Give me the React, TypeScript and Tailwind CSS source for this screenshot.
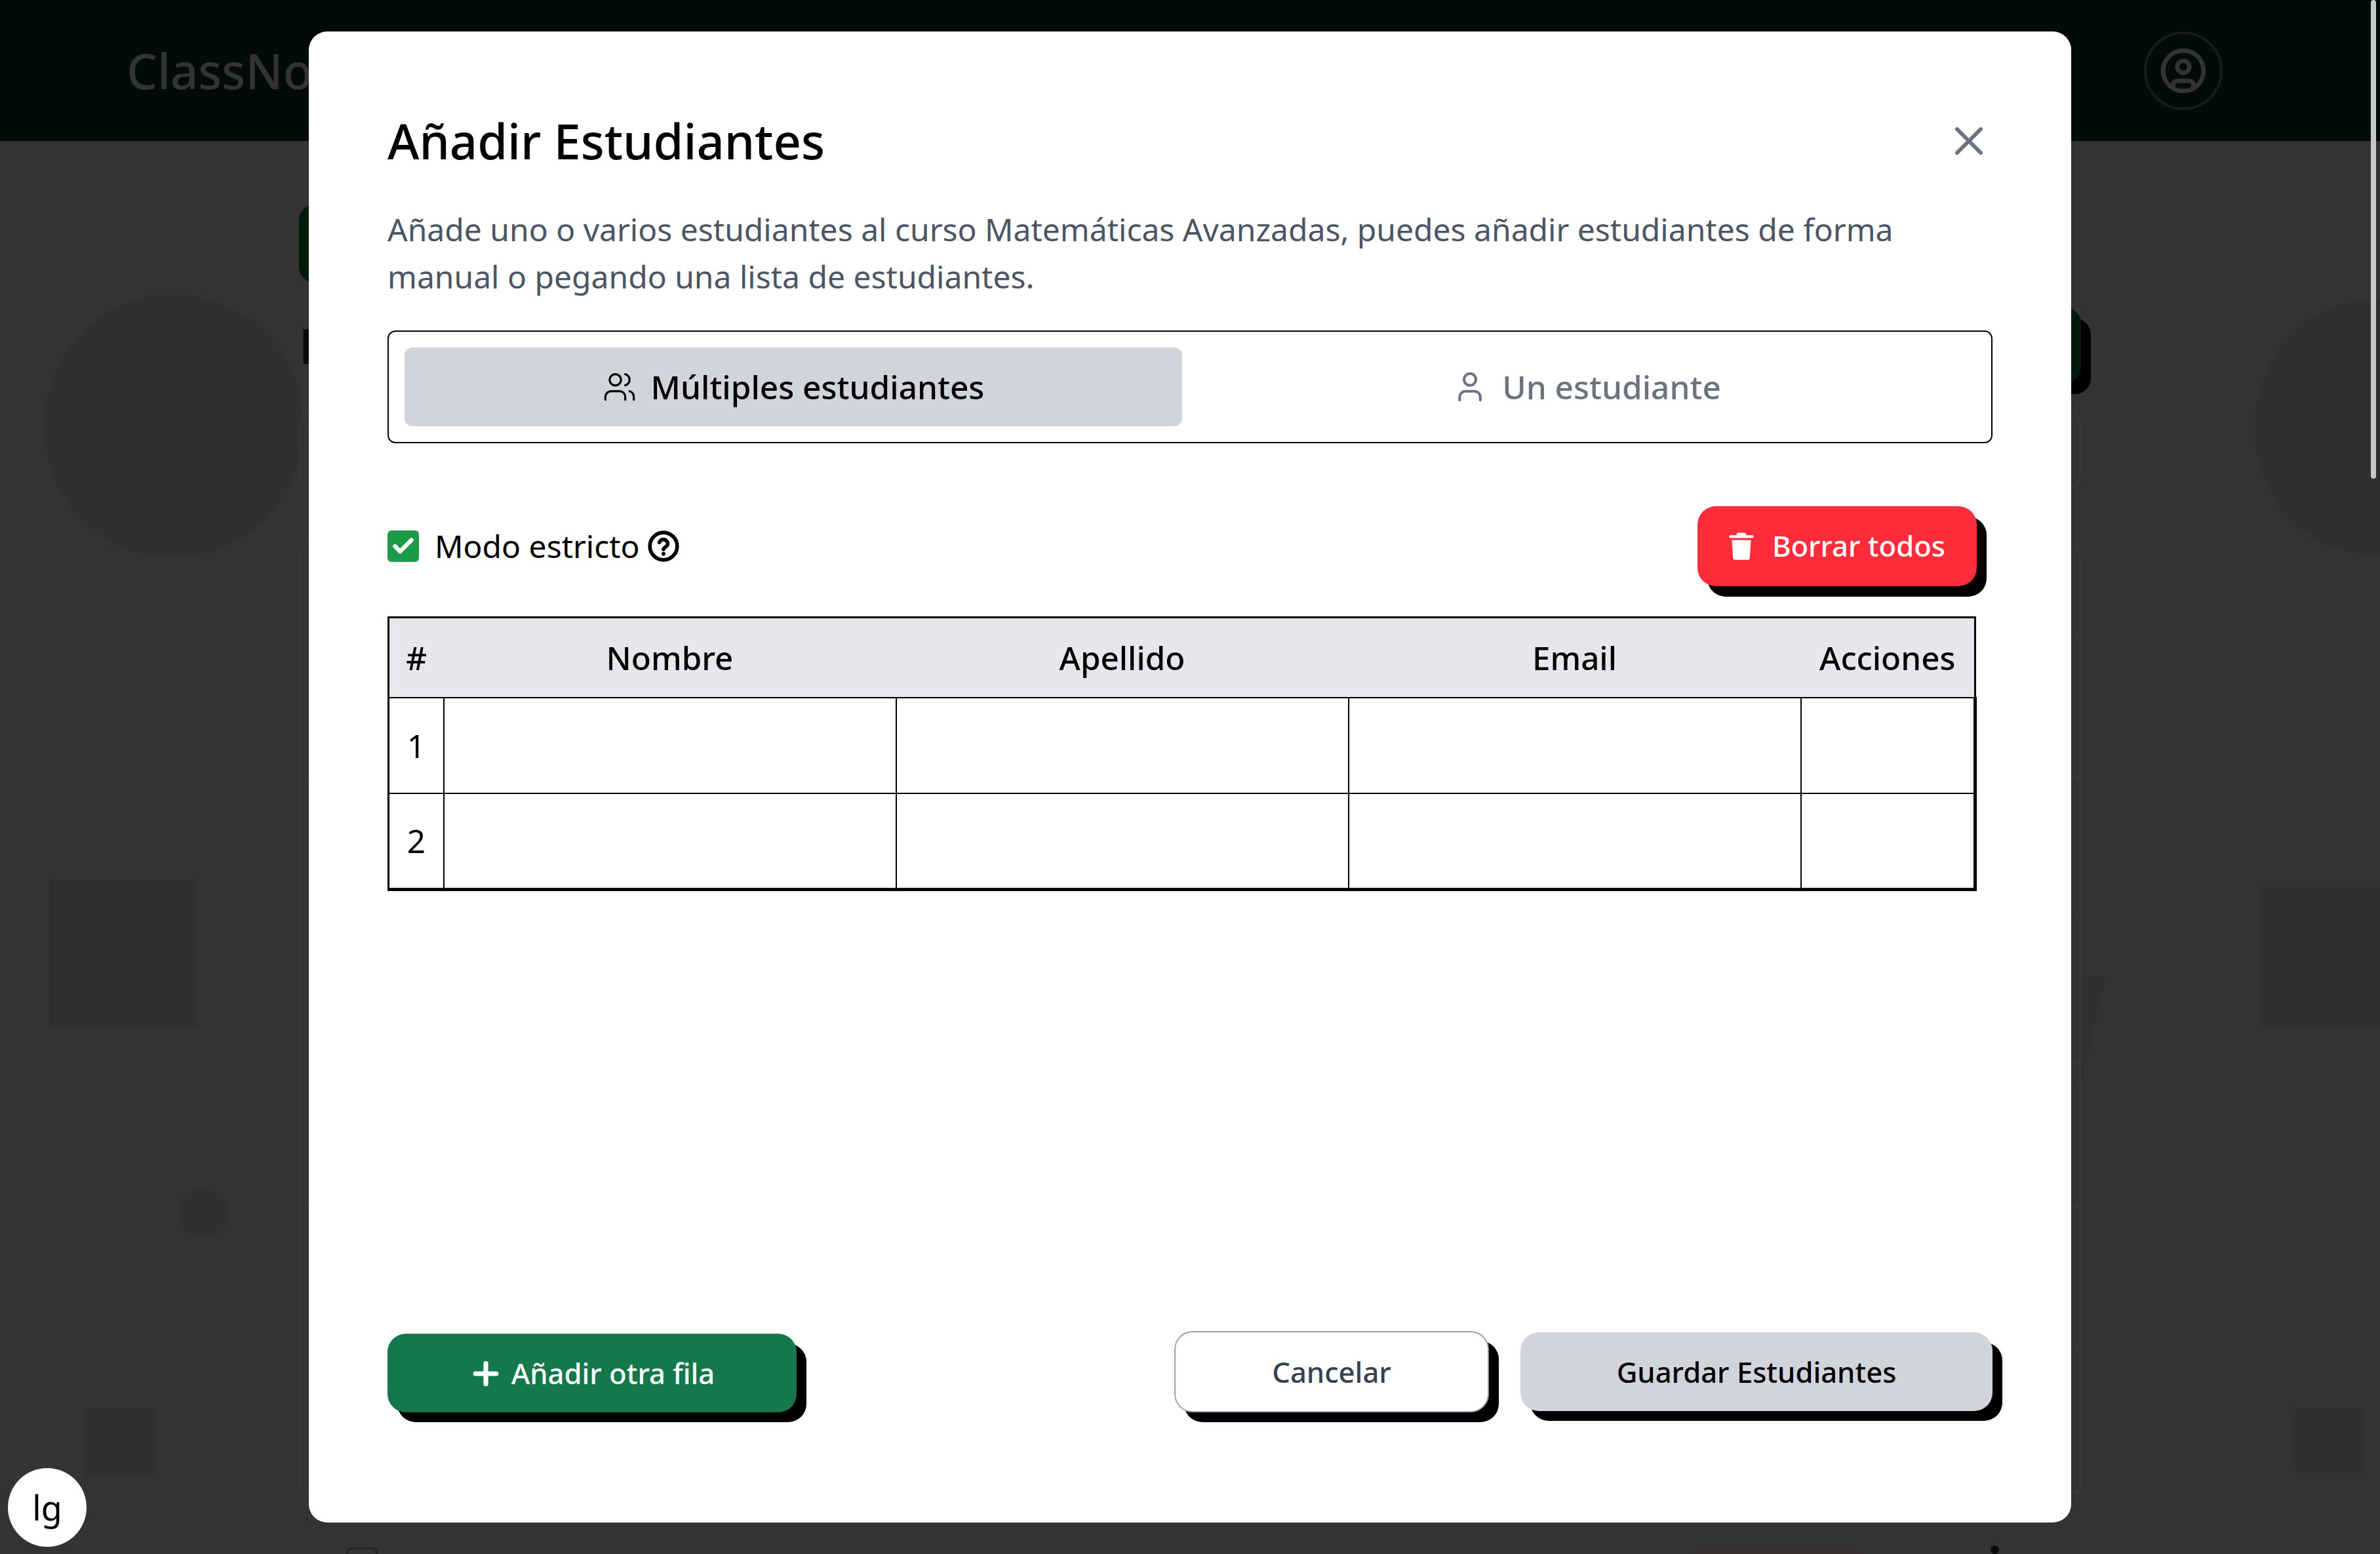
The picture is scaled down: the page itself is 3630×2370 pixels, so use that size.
import { Users, User, X, Plus, Check, CircleUser } from "lucide-react";

const font = { fontFamily: '"Noto Sans", sans-serif' };

function Trash() {
  return (
    <svg viewBox="0 0 24 24" className="w-[50px] h-[50px] -ml-[6px]" fill="white">
      <path d="M9.5 2.2h5a1 1 0 0 1 1 .9l.1.9H20a1 1 0 0 1 0 2H4a1 1 0 0 1 0-2h4.4l.1-.9a1 1 0 0 1 1-.9Z" />
      <path d="M5 7.5h14l-.9 13.2a1.5 1.5 0 0 1-1.5 1.3H7.4a1.5 1.5 0 0 1-1.5-1.3L5 7.5Z" />
    </svg>
  );
}

function Help() {
  return (
    <svg viewBox="0 0 24 24" className="w-[50px] h-[50px]" fill="none" stroke="black" strokeWidth="2.7" strokeLinecap="round" strokeLinejoin="round">
      <circle cx="12" cy="12" r="10" />
      <path d="M8.9 9.2a3.2 3.2 0 0 1 6.2 1c0 2.1-3.1 2.6-3.1 4.1" />
      <path d="M12 17.6h.01" />
    </svg>
  );
}

function Background() {
  return (
    <div className="relative h-[2370px] w-[3630px] overflow-hidden bg-[#333333] flex flex-col">
      <header className="h-[215px] shrink-0 bg-[#030b08] pl-[193px] pr-[240px] flex items-center justify-between">
        <span className="text-[74px] font-medium text-[#333333]">ClassNotes</span>
        <div className="w-[120px] h-[120px] rounded-full border-[4px] border-[#1a1a1a] flex items-center justify-center">
          <CircleUser className="w-[74px] h-[74px] text-[#333333]" strokeWidth={2.2} />
        </div>
      </header>
      <div className="flex-1 flex justify-between">
        <div className="w-[456px] shrink-0 pl-[68px] pt-[235px]">
          <div className="w-[394px] h-[400px] rounded-full bg-[#303030]" />
          <div className="ml-[8px] mt-[491px] w-[224px] h-[228px] bg-[#303030]" />
          <div className="ml-[204px] mt-[244px] w-[76px] h-[73px] rounded-full bg-[#303030]" />
          <div className="ml-[60px] mt-[261px] w-[107px] h-[105px] bg-[#303030]" />
        </div>
        <div className="flex-1 pt-[97px]">
          <div className="flex justify-between items-start h-[126px]">
            <div className="w-[60px] h-[119px] rounded-[24px] bg-[#021a0c]" />
            <div className="w-[100px] h-[115px] mt-[157px] rounded-[24px] bg-[#021a0c] shadow-[15px_17px_0_0_#000]" />
          </div>
          <div className="mt-[52px] h-[74px] text-[74px] leading-[74px] font-bold text-[#080c0c]">E</div>
          <div className="mt-[61px] h-[122px] rounded-[24px] border-[2px] border-[#393939]" />
          <div className="mt-[79px] h-[142px] rounded-t-[24px] border-[2px] border-[#393939]" />
          {[0, 1, 2, 3, 4, 5].map((i) => (
            <div key={i} className="h-[218px] border-[2px] border-t-0 border-[#393939]" />
          ))}
          <div className="flex items-start pt-[84px] text-[44px] leading-[60px] text-[#0a0a0a]">
            <span className="ml-[72px] w-[48px] h-[48px] rounded-[8px] border-[3px] border-[#222222]" />
            <span className="ml-[142px] w-[1017px]">Hoodie G</span>
            <span className="w-[845px]">Ropa hombre</span>
            <span className="w-[259px] h-[60px] rounded-[24px] bg-[#3a2e2e]" />
            <span className="ml-[197px] -mt-[3px] w-[13px] h-[13px] rounded-full bg-[#0a0a0a]" />
          </div>
        </div>
        <div className="w-[456px] shrink-0 flex flex-col items-end pt-[240px]">
          <div className="w-[190px] h-[393px] rounded-l-full bg-[#303030]" />
          <div className="mt-[497px] w-[185px] h-[225px] bg-[#303030]" />
          <div className="mt-[577px] mr-[25px] w-[105px] h-[100px] bg-[#303030]" />
        </div>
      </div>
      <svg className="absolute left-[3175px] top-[1490px]" width="36" height="160" viewBox="0 0 36 160">
        <polygon points="0,0 36,0 0,160" fill="#303030" />
      </svg>
    </div>
  );
}

export default function App() {
  return (
    <div className="relative h-[2370px] w-[3630px] overflow-hidden" style={font}>
      <Background />
      {/* scrollbar */}
      <div className="absolute top-0 right-[6px] w-[8px] h-[730px] rounded-full bg-[#c8c8c8]" />
      {/* language badge */}
      <div className="absolute left-[12px] bottom-[11px] w-[120px] h-[120px] rounded-full bg-white flex items-center justify-center text-[52px] text-black">
        lg
      </div>
      {/* modal */}
      <div className="absolute left-[471px] top-[48px] w-[2688px] h-[2274px] bg-white rounded-[28px] px-[120px] pt-[115px] flex flex-col">
        <div className="flex items-center justify-between h-[104px]">
          <h2 className="text-[74px] leading-[104px] font-medium text-black">Añadir Estudiantes</h2>
          <X className="w-[72px] h-[72px] text-[#6b7280]" strokeWidth={2} />
        </div>
        <p className="mt-[47px] text-[48px] leading-[72px] text-[#4b5563]">
          Añade uno o varios estudiantes al curso Matemáticas Avanzadas, puedes añadir estudiantes de forma
          <br />
          manual o pegando una lista de estudiantes.
        </p>
        <div className="mt-[46px] h-[172px] rounded-[12px] border-[2px] border-black p-[24px] flex gap-[24px]">
          <div className="flex-1 rounded-[12px] bg-[#d1d5db] flex items-center justify-center gap-[22px] text-[49.5px] font-medium text-black">
            <Users className="w-[52px] h-[52px]" strokeWidth={1.5} />
            Múltiples estudiantes
          </div>
          <div className="flex-1 flex items-center justify-center gap-[22px] text-[49.5px] font-medium text-[#6b7280]">
            <User className="w-[54px] h-[54px]" strokeWidth={1.8} />
            Un estudiante
          </div>
        </div>
        <div className="mt-[95px] h-[124px] flex items-center justify-between pr-[24px]">
          <div className="flex items-center text-[48px] text-black">
            <span className="w-[48px] h-[48px] rounded-[6px] bg-[#1b9a47] flex items-center justify-center">
              <Check className="w-[38px] h-[38px] text-white" strokeWidth={4} />
            </span>
            <span className="ml-[24px] mr-[11px]">Modo estricto</span>
            <Help />
          </div>
          <button className="h-[122px] w-[426px] rounded-[28px] bg-[#ff2d3b] text-white text-[43.6px] font-medium flex items-center justify-center gap-[22px] shadow-[15px_16px_0_0_#000]">
            <Trash />
            Borrar todos
          </button>
        </div>
        <table className="mt-[45px] w-[2424px] border-[3px] border-black border-collapse table-fixed text-[49.3px] text-black">
          <thead>
            <tr className="h-[122px] bg-[#e5e7eb]">
              <th className="w-[84px] font-medium">#</th>
              <th className="w-[690px] font-medium">Nombre</th>
              <th className="w-[690px] font-medium">Apellido</th>
              <th className="w-[690px] font-medium">Email</th>
              <th className="font-medium">Acciones</th>
            </tr>
          </thead>
          <tbody>
            <tr className="h-[146px]">
              <td className="border-[2px] border-black text-center">1</td>
              <td className="border-[2px] border-black" />
              <td className="border-[2px] border-black" />
              <td className="border-[2px] border-black" />
              <td className="border-[2px] border-r-[5px] border-black" />
            </tr>
            <tr className="h-[147px]">
              <td className="border-[2px] border-b-[5px] border-black text-center">2</td>
              <td className="border-[2px] border-b-[5px] border-black" />
              <td className="border-[2px] border-b-[5px] border-black" />
              <td className="border-[2px] border-b-[5px] border-black" />
              <td className="border-[2px] border-b-[5px] border-r-[5px] border-black" />
            </tr>
          </tbody>
        </table>
        <div className="mt-auto mb-[168px] flex items-end justify-between">
          <button className="h-[120px] w-[624px] pl-[9px] pt-[2px] rounded-[28px] bg-[#15784b] text-white text-[43.6px] font-medium flex items-center justify-center gap-[12px] shadow-[15px_15px_0_0_#000]">
            <Plus className="w-[54px] h-[54px] -ml-[11px]" strokeWidth={3.2} />
            Añadir otra fila
          </button>
          <div className="flex items-center gap-[48px]">
            <button className="h-[124px] w-[480px] pt-[2px] rounded-[28px] bg-white border-[2px] border-[#9ca3af] text-[#374151] text-[43.6px] font-medium shadow-[15px_15px_0_0_#000]">
              Cancelar
            </button>
            <button className="h-[120px] w-[720px] pt-[2px] rounded-[28px] bg-[#d1d5db] text-black text-[43.6px] font-medium shadow-[15px_15px_0_0_#000]">
              Guardar Estudiantes
            </button>
          </div>
        </div>
      </div>
    </div>
  );
}
